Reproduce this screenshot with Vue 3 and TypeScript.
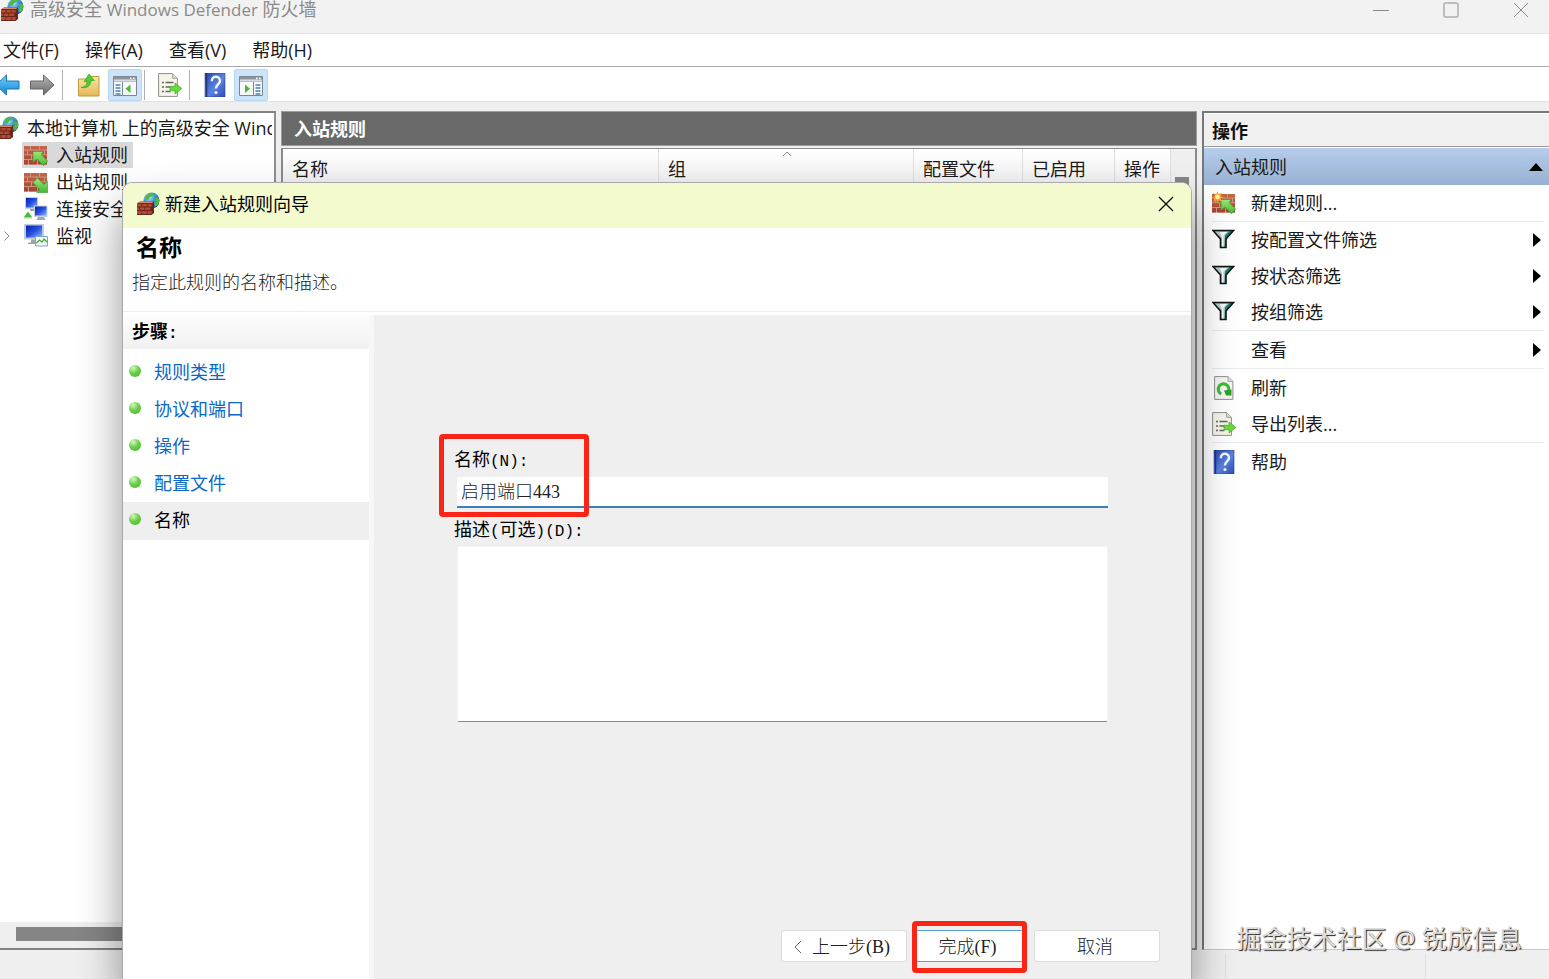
<script setup lang="ts">
import { ref } from 'vue'

interface TreeItem { icon: string; label: string; selected?: boolean; expandable?: boolean }
interface ActionItem { icon?: string; label: string; submenu?: boolean }

const menus: string[] = ['文件(F)', '操作(A)', '查看(V)', '帮助(H)']

const tree: TreeItem[] = [
  { icon: 'inbound', label: '入站规则', selected: true },
  { icon: 'outbound', label: '出站规则' },
  { icon: 'computers', label: '连接安全规则' },
  { icon: 'monitor', label: '监视', expandable: true },
]

const actionGroups: ActionItem[][] = [
  [{ icon: 'newrule', label: '新建规则...' }],
  [
    { icon: 'funnel', label: '按配置文件筛选', submenu: true },
    { icon: 'funnel', label: '按状态筛选', submenu: true },
    { icon: 'funnel', label: '按组筛选', submenu: true },
  ],
  [{ label: '查看', submenu: true }],
  [
    { icon: 'refresh', label: '刷新' },
    { icon: 'export', label: '导出列表...' },
  ],
  [{ icon: 'help', label: '帮助' }],
]

const steps: string[] = ['规则类型', '协议和端口', '操作', '配置文件']
const ruleName = ref('启用端口443')
const description = ref('')
</script>

<template>
  <div class="window">
    <svg class="sprite" aria-hidden="true">
      <defs>
        <radialGradient id="globeFill" cx="0.35" cy="0.3" r="0.8">
          <stop offset="0" stop-color="#bfe6fb" /><stop offset="0.45" stop-color="#3b93d4" /><stop offset="1" stop-color="#144a8c" />
        </radialGradient>
        <linearGradient id="brickFill" x1="0" y1="0" x2="0" y2="1">
          <stop offset="0" stop-color="#c4664c" /><stop offset="1" stop-color="#a2432f" />
        </linearGradient>
        <linearGradient id="greenFill" x1="0" y1="0" x2="0" y2="1">
          <stop offset="0" stop-color="#9bea74" /><stop offset="1" stop-color="#43b835" />
        </linearGradient>
        <linearGradient id="blueFill" x1="0" y1="0" x2="0" y2="1">
          <stop offset="0" stop-color="#6fd0fa" /><stop offset="1" stop-color="#1583cf" />
        </linearGradient>
        <linearGradient id="grayFill" x1="0" y1="0" x2="0" y2="1">
          <stop offset="0" stop-color="#b4b4b4" /><stop offset="1" stop-color="#6c6c6c" />
        </linearGradient>
        <linearGradient id="helpFill" x1="0" y1="0" x2="1" y2="1">
          <stop offset="0" stop-color="#2447b0" /><stop offset="0.55" stop-color="#5b82e0" /><stop offset="1" stop-color="#2c4db4" />
        </linearGradient>
        <linearGradient id="folderFill" x1="0" y1="0" x2="0" y2="1">
          <stop offset="0" stop-color="#fbe7a4" /><stop offset="1" stop-color="#e3b757" />
        </linearGradient>
        <linearGradient id="screenFill" x1="0" y1="0" x2="1" y2="1">
          <stop offset="0" stop-color="#0a1fa8" /><stop offset="0.5" stop-color="#2450e0" /><stop offset="1" stop-color="#8cb4ff" />
        </linearGradient>
      </defs>

      <symbol id="firewall" viewBox="0 0 24 24">
        <circle cx="15.5" cy="8.5" r="8" fill="url(#globeFill)" />
        <path d="M11 2.500c2-1.600 5-1.700 6.500-.8l-1 2.300-2.500 1-1 2.500-3 .5-1-2zM19 6l3.500-.5c1 2 1 5-.3 7.300l-2.700 1.700-1.500-2.500 1.500-2.500zM18 1.500l3 2-1.500.5z" fill="#4fb84a" />
        <path d="M1 11.500l3-2h14v11.500L15.500 23H1z" fill="#6e2519" />
        <path d="M1 12h4.500v2.600H1zM6.300 12h4.500v2.600H6.300zM11.600 12h4v2.600h-4zM1 15.500h2v2.600H1zM3.900 15.500h4.500v2.600H3.900zM9.200 15.500h5v2.600h-5zM1 19h4.500v3H1zM6.300 19h4.500v3H6.300zM11.600 19h4v3h-4z" fill="#b04c36" />
        <path d="M4 9.500h14l-2 1.500H2z" fill="#d58a70" />
      </symbol>

      <symbol id="wall" viewBox="0 0 24 24">
        <path d="M0 3h23v18.500H0z" fill="#cf9480" />
        <path d="M0 3h6v3.600H0zM7 3h8v3.600H7zM16 3h7v3.600h-7zM0 7.500h3v3.800H0zM4 7.500h8v3.800H4zM13 7.500h7v3.800h-7zM21 7.500h2v3.800h-2zM0 12.200h7v3.800H0zM8 12.200h8v3.800H8zM17 12.200h6v3.800h-6zM0 17h4v4.500H0zM5 17h8v4.500H5zM14 17h9v4.500h-9z" fill="url(#brickFill)" />
      </symbol>
      <symbol id="inbound" viewBox="0 0 24 24">
        <use href="#wall" />
        <path d="M9 8.500h10.500l-2.500 3L23.700 18 19.500 22.800 13 16l-4 3.500z" fill="url(#greenFill)" stroke="#37922e" stroke-width=".6" />
      </symbol>
      <symbol id="outbound" viewBox="0 0 24 24">
        <use href="#wall" />
        <path d="M23.700 22.500H12.500l3-3L9 12.500 13.500 8l6.500 6.500 3.700-3.500z" fill="url(#greenFill)" stroke="#37922e" stroke-width=".6" />
      </symbol>
      <symbol id="newrule" viewBox="0 0 24 24">
        <use href="#inbound" />
        <path d="M5.500 0l1.300 3.200L10 1.700 8.700 4.900l3.300 1.300-3.300 1.300L10 10.700 6.800 9.400 5.500 12 4.200 9.400 1 10.700l1.300-3.200L0 6.200l3.300-1.300L1 1.700l3.200 1.500z" fill="#f6a22b" />
        <circle cx="5.500" cy="6" r="2.400" fill="#fff1a0" />
      </symbol>

      <symbol id="computers" viewBox="0 0 24 24">
        <path d="M1 0h13v12H1z" fill="#c9d0de" /><path d="M2 1h11v9.500H2z" fill="url(#screenFill)" />
        <path d="M6 12h5v2H6z" fill="#9aa0ab" />
        <path d="M10 8.500h13.500v11.500H10z" fill="#c9d0de" /><path d="M11 9.500h11.500v9H11z" fill="url(#screenFill)" />
        <path d="M14 20h6l1.500 3h-9z" fill="#a2a8b2" />
        <path d="M0 20l4-5.500 4 5.500z" fill="#45bd3b" /><path d="M0 20h8v1.500H0z" fill="#a8d8a2" />
      </symbol>
      <symbol id="monitor" viewBox="0 0 24 24">
        <path d="M0 0h20v15.500H0z" fill="#c4cbd8" /><path d="M2 1.500h16v12H2z" fill="url(#screenFill)" />
        <path d="M7 15.500h7v3h3v1.500H4v-1.500h3z" fill="#9ca3af" />
        <path d="M11.500 12.500h12v9.500h-12z" fill="#f3faf8" stroke="#7da7c4" />
        <path d="M12.500 19l3-3 2.500 2 2-3 3 3" fill="none" stroke="#3fae3a" stroke-width="1.300" />
      </symbol>

      <symbol id="funnel" viewBox="0 0 24 24">
        <path d="M1 2.500h20.500L14 11v8.500H8.500V11z" fill="#1b8079" stroke="#141414" stroke-width="1.600" />
        <path d="M3 3.500h14L13 7l-.5 11.500H9.500V10.500z" fill="#b9cbca" />
        <path d="M8 4h7l-3.500 4v10.500h-1.500V9z" fill="#f4f7f7" />
      </symbol>

      <symbol id="help" viewBox="0 0 24 24">
        <path d="M2 0h20v24H2z" fill="url(#helpFill)" stroke="#2a4290" stroke-width=".6" />
        <path d="M3.500 0v24" stroke="#1d3584" stroke-width="1.500" />
        <path d="M8.800 8.200C8.800 5 10.500 3.800 12.800 3.800s4.200 1.500 4.200 4c0 3.700-4 3.700-4 7.700" fill="none" stroke="#f4f7ff" stroke-width="2.400" />
        <circle cx="13" cy="19.500" r="1.600" fill="#f4f7ff" />
      </symbol>

      <symbol id="page" viewBox="0 0 24 24">
        <path d="M.6.600h14l4.800 4.800v18H.6z" fill="#f6f5e8" stroke="#8e8e88" />
        <path d="M14.600.600v4.800h4.800" fill="#dedccb" stroke="#a5a5a0" />
      </symbol>
      <symbol id="export" viewBox="0 0 24 24">
        <use href="#page" />
        <path d="M4 9.500h2M4 14h2M4 18.500h2M7.500 9.500h8M7.500 14h5M7.500 18.500h5" stroke="#666" stroke-width="1.300" />
        <path d="M12 13.300h5V10l7 5.500-7 5.500v-3.300h-5z" fill="#6ad93d" stroke="#35a31f" stroke-width=".6" />
      </symbol>
      <symbol id="refresh" viewBox="0 0 24 24">
        <path d="M2.600.600h13.500l4.800 4.800v18H2.600z" fill="#f5f5f3" stroke="#8e8e8e" />
        <path d="M16.100.600v4.800h4.800" fill="#ddd" stroke="#a5a5a5" />
        <path d="M9.300 18a5.300 5.300 0 1 1 7-2.500" fill="none" stroke="#3dba33" stroke-width="3" />
        <path d="M12 14.500l7.500-1v6h-5.500z" fill="#2ba325" />
      </symbol>

      <symbol id="back" viewBox="0 0 24 24">
        <path d="M0 12L10.500 2v6H23v8H10.500v6z" fill="url(#blueFill)" stroke="#1c75b4" />
      </symbol>
      <symbol id="forward" viewBox="0 0 24 24">
        <path d="M24 12L13.500 2v6H.5v8h13v6z" fill="url(#grayFill)" stroke="#666" />
      </symbol>
      <symbol id="folder" viewBox="0 0 24 24">
        <path d="M1.500 6h9l2-2.500h9.500V23H1.500z" fill="url(#folderFill)" stroke="#c49a43" />
        <path d="M4 14.500c4-.5 6-2.500 6-6H7L12 1l5.500 6.500H14c0 5-3.500 8-10 7z" fill="#55c832" stroke="#2f9a22" stroke-width=".6" />
      </symbol>
      <symbol id="pane" viewBox="0 0 24 24">
        <path d="M.500 3.500h23v19H.500z" fill="#f7f8f9" stroke="#7d8790" />
        <path d="M1 4h22v2.600H1z" fill="#8b949c" /><path d="M1 7.500h22v1.500H1z" fill="#b9c0c6" />
        <path d="M17 4.500h1.500v1.500H17zM20 4.500h1.500v1.500H20z" fill="#fff" />
      </symbol>
      <symbol id="treepane" viewBox="0 0 24 24">
        <use href="#pane" />
        <path d="M9.500 9v13.500" stroke="#7d8790" /><path d="M2.500 12h5M2.500 15h5M2.500 18h5M2.500 21h5" stroke="#4d83b8" stroke-width="1.300" />
        <path d="M17.500 11.500v8.500l-5-4.200z" fill="#4cb637" />
      </symbol>
      <symbol id="actionpane" viewBox="0 0 24 24">
        <use href="#pane" />
        <path d="M14.500 9v13.500" stroke="#7d8790" /><path d="M16.500 12h5M16.500 15h5M16.500 18h5M16.500 21h5" stroke="#4d83b8" stroke-width="1.300" />
        <path d="M6 11.500v8.500l5-4.200z" fill="#4cb637" />
      </symbol>
    </svg>

    <header class="titlebar">
      <svg class="icon"><use href="#firewall" /></svg>
      <span class="title">高级安全 <span class="latin">Windows Defender</span> 防火墙</span>
      <div class="caption">
        <button type="button" aria-label="最小化"><svg viewBox="0 0 16 16"><path d="M0 8.500h16" /></svg></button>
        <button type="button" aria-label="最大化"><svg viewBox="0 0 16 16"><rect x="1" y="1" width="14" height="14" rx="1" /></svg></button>
        <button type="button" aria-label="关闭"><svg viewBox="0 0 16 16"><path d="M1 1l14 14M15 1L1 15" /></svg></button>
      </div>
    </header>

    <nav class="menubar">
      <button v-for="m in menus" :key="m" type="button">{{ m }}</button>
    </nav>

    <div class="toolbar">
      <button type="button" class="first" aria-label="后退"><svg class="icon"><use href="#back" /></svg></button>
      <button type="button" aria-label="前进"><svg class="icon"><use href="#forward" /></svg></button>
      <i class="sep"></i>
      <button type="button" aria-label="向上"><svg class="icon"><use href="#folder" /></svg></button>
      <button type="button" class="on" aria-label="显示控制台树"><svg class="icon"><use href="#treepane" /></svg></button>
      <i class="sep tight"></i>
      <button type="button" aria-label="导出"><svg class="icon"><use href="#export" /></svg></button>
      <i class="sep tight"></i>
      <button type="button" aria-label="帮助主题"><svg class="icon"><use href="#help" /></svg></button>
      <button type="button" class="on" aria-label="显示操作窗格"><svg class="icon"><use href="#actionpane" /></svg></button>
    </div>

    <main class="workspace">
      <aside class="tree">
        <div class="root-node"><svg class="icon"><use href="#firewall" /></svg><span>本地计算机 上的高级安全 Wind</span></div>
        <ul>
          <li v-for="t in tree" :key="t.label">
            <svg v-if="t.expandable" class="chevron" viewBox="0 0 8 12"><path d="M1.500 1.500L6 6l-4.500 4.500" /></svg>
            <span class="node" :class="{ selected: t.selected }"><svg class="icon"><use :href="'#' + t.icon" /></svg>{{ t.label }}</span>
          </li>
        </ul>
        <div class="hscroll"><div class="thumb"></div></div>
      </aside>

      <section class="center">
        <h2>入站规则</h2>
        <div class="list">
          <table>
            <colgroup><col /><col class="c-group" /><col class="c-profile" /><col class="c-enabled" /><col class="c-action" /></colgroup>
            <thead>
              <tr>
                <th>名称</th>
                <th>组<svg class="sort" viewBox="0 0 10 6"><path d="M1 5l4-4 4 4" /></svg></th>
                <th>配置文件</th><th>已启用</th><th>操作</th>
              </tr>
            </thead>
          </table>
          <div class="vscroll"><div class="thumb"></div></div>
        </div>
      </section>

      <aside class="actions">
        <h2>操作</h2>
        <h3>入站规则<svg viewBox="0 0 14 8"><path d="M0 8l7-8 7 8z" /></svg></h3>
        <ul v-for="(g, i) in actionGroups" :key="i">
          <li v-for="a in g" :key="a.label">
            <button type="button">
              <svg class="icon"><use v-if="a.icon" :href="'#' + a.icon" /></svg>
              <span>{{ a.label }}</span>
              <svg v-if="a.submenu" class="arrow" viewBox="0 0 8 14"><path d="M0 0l8 7-8 7z" /></svg>
            </button>
          </li>
        </ul>
      </aside>
    </main>

    <footer class="statusbar"><span></span><span></span></footer>

    <section class="dialog" role="dialog" aria-labelledby="wizardTitle">
      <header class="dialog-title">
        <svg class="icon"><use href="#firewall" /></svg>
        <span id="wizardTitle">新建入站规则向导</span>
        <button type="button" aria-label="关闭向导"><svg viewBox="0 0 16 16"><path d="M1 1l14 14M15 1L1 15" /></svg></button>
      </header>
      <div class="intro">
        <h1>名称</h1>
        <p>指定此规则的名称和描述。</p>
      </div>
      <div class="dialog-body">
        <nav class="steps">
          <h4>步骤<span class="half">:</span></h4>
          <ul>
            <li v-for="s in steps" :key="s"><i class="bullet"></i><a href="#">{{ s }}</a></li>
            <li class="current"><i class="bullet"></i>名称</li>
          </ul>
        </nav>
        <form class="pane" @submit.prevent>
          <div class="field marked">
            <label for="ruleName">名称<span class="half">(N):</span></label>
            <input id="ruleName" v-model="ruleName" type="text" />
          </div>
          <div class="field">
            <label for="ruleDesc">描述<span class="half">(</span>可选<span class="half">)(D):</span></label>
            <textarea id="ruleDesc" v-model="description"></textarea>
          </div>
          <div class="buttons">
            <button type="button"><svg viewBox="0 0 8 14"><path d="M7 1L1 7l6 6" /></svg>上一步(B)</button>
            <div class="finish"><button type="submit">完成(F)</button></div>
            <button type="button">取消</button>
          </div>
        </form>
      </div>
    </section>

    <div class="watermark">掘金技术社区 @ 锐成信息</div>
  </div>
</template>

<style>
body { margin: 0; }
</style>

<style scoped>
*, *::after { box-sizing: border-box; }
.window {
  position: relative; display: flex; flex-direction: column; height: 100vh; overflow: hidden;
  background: #efefef; color: #1a1a1a;
  font-family: "Open Sans", "Noto Sans CJK SC", sans-serif; font-size: 18px; line-height: 26px;
}
.sprite { position: absolute; width: 0; height: 0; }
.icon { width: 24px; height: 24px; flex: none; }
button { font: inherit; color: inherit; border: 0; background: none; padding: 0; }
ul { list-style: none; margin: 0; padding: 0; }
h1, h2, h3, h4, p { margin: 0; font-size: 18px; }

.titlebar { display: flex; align-items: center; height: 33px; padding-bottom: 14px; background: #f2f2f2; color: #8a8a8a; flex: none; }
.titlebar .title { flex: 1; margin-left: 6px; line-height: 20px; white-space: nowrap; }
.latin { font-size: 17px; }
.caption { display: flex; gap: 54px; padding-right: 20px; }
.caption button { width: 16px; height: 16px; display: flex; }
.caption svg, .dialog-title button svg { width: 16px; height: 16px; fill: none; stroke: #8a8a8a; stroke-width: 1; }

.menubar { display: flex; gap: 26px; align-items: center; height: 34px; padding-left: 3px; background: #fff; border-top: 1px solid #e4e4e4; border-bottom: 1px solid #a8a8a8; flex: none; }
.toolbar { display: flex; align-items: center; height: 35px; background: #fff; border-bottom: 1px solid #e2e2e2; flex: none; padding-top: 2px; }
.toolbar button { width: 34px; height: 32px; display: flex; align-items: center; justify-content: center; }
.toolbar .first { width: 25px; justify-content: flex-start; margin-left: -4px; margin-right: 4px; }
.toolbar .on { margin-left: 2px; background: #cce4f7; border: 1px solid #b5d8f3; border-radius: 2px; }
.sep { width: 1px; height: 30px; background: #b0b0b0; margin: 0 9px 0 3px; }
.sep.tight { margin: 0 8px 0 2px; }

.workspace { flex: 1; min-height: 0; display: flex; padding-top: 9px; }
.tree { width: 276px; flex: none; background: #fff; border: 2px solid #828282; border-left: 0; border-right-color: #8f8f8f; padding-top: 1px; display: flex; flex-direction: column; overflow: hidden; }
.root-node { display: flex; align-items: center; height: 27px; margin-left: -5px; margin-right: 2px; white-space: nowrap; overflow: hidden; }
.root-node span { margin-left: 8px; }
.tree li { display: flex; align-items: center; height: 27px; padding-left: 22px; position: relative; }
.node { display: flex; align-items: center; height: 26px; padding: 0 5px 0 2px; gap: 8px; white-space: nowrap; }
.node.selected { background: #d9d9d9; }
.chevron { position: absolute; left: 3px; width: 8px; height: 12px; fill: none; stroke: #8a8a8a; stroke-width: 1; }
.hscroll { margin-top: auto; height: 26px; background: #efefef; padding: 5px 0 7px 16px; }
.hscroll .thumb { height: 14px; background: #858585; }

.center { flex: 1; min-width: 0; margin-left: 5px; display: flex; flex-direction: column; }
.center h2 { height: 35px; line-height: 34px; padding-left: 12px; background: #696969; border: 1px solid #9c9c9c; color: #fff; font-weight: 700; }
.list { flex: 1; margin-top: 2px; display: flex; align-items: flex-start; background: #fff; border: 2px solid #8a8a8a; border-top-width: 1px; }
table { flex: 1; width: 100%; border-collapse: collapse; table-layout: fixed; }
.c-group { width: 255px; } .c-profile { width: 109px; } .c-enabled { width: 92px; } .c-action { width: 56px; }
th { position: relative; height: 42px; padding: 0 0 3px 9px; font-weight: 400; text-align: left; white-space: nowrap; background: linear-gradient(#fff, #ececee); border-right: 1px solid #dedede; }
.sort { position: absolute; left: 123px; top: 2px; width: 10px; height: 6px; fill: none; stroke: #888; }
.vscroll { align-self: stretch; width: 24px; background: #efefef; padding: 28px 6px 0 4px; }
.vscroll .thumb { height: 90%; background: #858585; }

.actions { width: 347px; flex: none; margin-left: 5px; background: #fff; border: 2px solid #777; border-right: 0; border-bottom: 1px solid #c8c8c8; }
.actions h2 { height: 34px; line-height: 34px; padding-left: 8px; background: #f0f0f0; border-bottom: 1px solid #9a9a9a; border-top: 1px solid #fff; font-weight: 700; color: #111; }
.actions h3 { display: flex; align-items: center; justify-content: space-between; height: 37px; margin-top: 1px; padding: 0 6px 0 11px; background: linear-gradient(#b6cdec, #98b1d2); font-weight: 400; }
.actions h3 svg { width: 14px; height: 8px; }
.actions ul { margin: 0 5px 0 8px; }
.actions ul + ul { border-top: 1px solid #ebebeb; }
.actions ul + ul + ul { padding-top: 1px; }
.actions li button { width: 100%; height: 36px; display: flex; align-items: center; text-align: left; }
.actions li span { margin-left: 15px; flex: 1; }
.arrow { width: 8px; height: 14px; margin-right: 3px; }

.statusbar { height: 29px; flex: none; display: flex; justify-content: flex-end; background: #efefef; }
.statusbar span { width: 200px; border-left: 1px solid #e0e0e0; margin-top: 4px; }
.statusbar span:last-child { width: 124px; }

.dialog { position: absolute; left: 122px; right: 357px; top: 182px; bottom: 0; display: flex; flex-direction: column; background: #fff; border: 1px solid #a9a9a9; border-bottom: 0; border-radius: 10px 10px 0 0; overflow: hidden; box-shadow: 0 26px 44px rgba(0, 0, 0, .42); color: #000; font-family: "Liberation Serif", "Noto Sans CJK SC", serif; }
.dialog-title { display: flex; align-items: center; height: 45px; flex: none; padding: 0 17px 3px 13px; background: #f3facd; font-family: "Open Sans", "Noto Sans CJK SC", sans-serif; }
.dialog-title span { flex: 1; margin-left: 5px; }
.dialog-title button { width: 16px; height: 16px; display: flex; }
.dialog-title button svg { stroke: #111; stroke-width: 1.4; }
.intro { flex: none; height: 84px; padding: 5px 0 0 13px; border-bottom: 1px solid #ececec; }
.intro h1 { font-size: 23px; line-height: 32px; }
.intro p { margin: 6px 0 0 -4px; font-weight: 300; line-height: 24px; color: #222; }
.dialog-body { flex: 1; min-height: 0; display: flex; padding-top: 3px; }
.steps { width: 251px; flex: none; border-right: 5px solid #f7f7f7; }
.steps h4 { height: 34px; line-height: 34px; padding-left: 9px; background: linear-gradient(#fdfdfd, #f1f1f1); }
.half { font-family: "Liberation Mono", monospace; font-size: 16px; }
.steps ul { padding-top: 5px; }
.steps li { display: flex; align-items: center; height: 37px; padding-left: 6px; gap: 13px; }
.steps .current { height: 38px; background: #efefef; }
.steps a { color: #0a68c8; text-decoration: none; }
.bullet { width: 12px; height: 12px; margin-bottom: 4px; border-radius: 50%; background: radial-gradient(circle at 35% 25%, #d8f5c8, #6cd046 45%, #44b32c); }
.pane { flex: 1; min-width: 0; display: flex; flex-direction: column; padding: 133px 83px 17px; background: #efefef; }
.field { position: relative; display: flex; flex-direction: column; }
.field label { line-height: 24px; margin-left: -3px; }
.field input { height: 31px; margin: 3px 0 10px; padding: 0 5px 4px 4px; border: 0; border-bottom: 2px solid #3b7fb5; border-radius: 2px 2px 0 0; background: #fff; font: inherit; font-weight: 300; color: #222; outline: 0; }
.field textarea { height: 176px; margin-top: 2px; padding: 5px; border: 1px solid #f4f4f4; border-bottom-color: #8a8a8a; border-radius: 2px; background: #fff; font: inherit; resize: none; outline: 0; }
.marked::after { content: ""; position: absolute; left: -18px; top: -14px; width: 150px; height: 83px; border: 5px solid #fb2517; border-radius: 4px; }
.buttons { display: flex; justify-content: flex-end; align-items: center; margin: auto -52px 0 0; }
.buttons button { display: flex; align-items: center; justify-content: center; gap: 10px; width: 126px; height: 32px; padding: 2px 4px 0 0; background: #fff; border: 1px solid #dcdcdc; border-radius: 3px; font-weight: 300; color: #222; }
.buttons button svg { width: 8px; height: 14px; fill: none; stroke: #666; }
.finish { position: relative; margin: 0 7px 0 5px; }
.buttons .finish button { width: 115px; border-color: #5c9fd6; }
.finish::after { content: ""; position: absolute; inset: -9px 0 -11px; border: 5px solid #fb2517; border-radius: 4px; }

.watermark { position: absolute; right: 27px; bottom: 23px; font-size: 25px; line-height: 36px; color: #dcdcdc; text-shadow: 1px 1px 1px #222; white-space: nowrap; }
</style>
